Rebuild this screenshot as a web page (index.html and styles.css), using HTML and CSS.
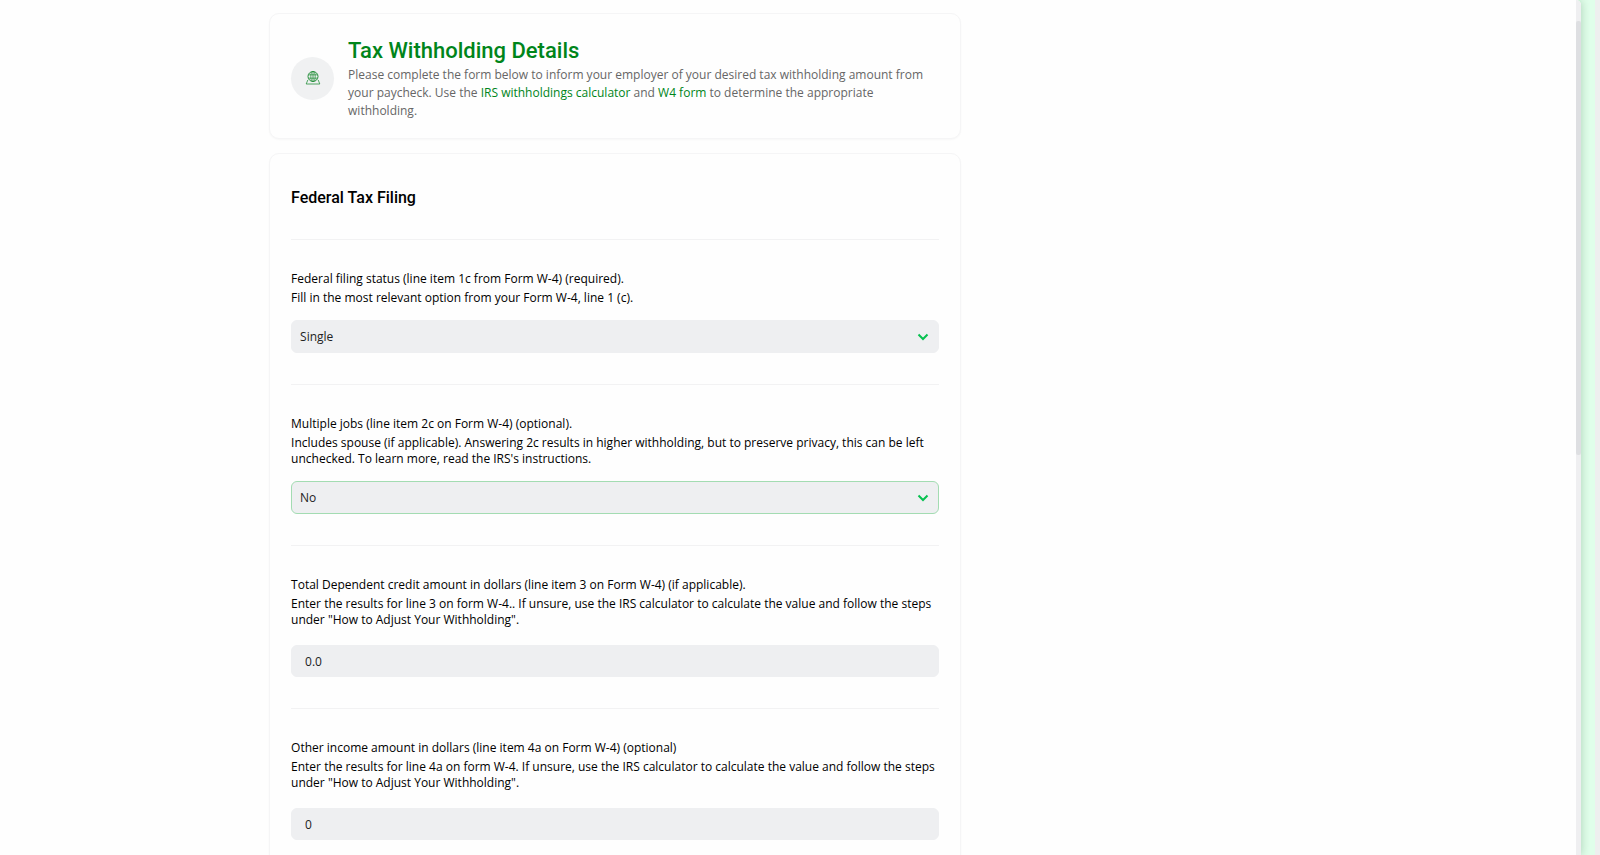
FILE: index.html
```html
<!DOCTYPE html>
<html lang="en">
<head>
    <meta charset="UTF-8">
    <meta name="viewport" content="width=device-width, initial-scale=1.0">
    <title>Tax Withholding Details</title>
    <link rel="stylesheet" href="styles.css">
</head>
<body>
    <div class="window">
        <main class="page">
            <div class="content">
                <header class="card intro">
                    <div class="intro-icon">
                        <svg viewBox="0 0 16 16" width="16" height="16" fill="none" stroke="#27903c" aria-hidden="true">
                            <circle cx="8" cy="6.5" r="5"/>
                            <ellipse cx="8" cy="6.5" rx="2.2" ry="5" stroke-width=".8"/>
                            <path d="M3.4 4.8h9.2M3.4 8.2h9.2M8 1.5v10" stroke-width=".8"/>
                            <path d="M2.8 10L1.2 14h13.6l-1.6-4" stroke-width=".8"/>
                        </svg>
                    </div>
                    <div class="intro-text">
                        <h1>Tax Withholding Details</h1>
                        <p>Please complete the form below to inform your employer of your desired tax withholding amount from your paycheck. Use the <a href="#">IRS withholdings calculator</a> and <a href="#">W4 form</a> to determine the appropriate withholding.</p>
                    </div>
                </header>

                <form class="card">
                    <h2>Federal Tax Filing</h2>

                    <div class="field">
                        <label for="status">Federal filing status (line item 1c from Form W-4) (required).</label>
                        <p>Fill in the most relevant option from your Form W-4, line 1 (c).</p>
                        <select id="status">
                            <option>Single</option>
                            <option>Married</option>
                            <option>Head of household</option>
                        </select>
                    </div>

                    <div class="field">
                        <label for="jobs">Multiple jobs (line item 2c on Form W-4) (optional).</label>
                        <p>Includes spouse (if applicable). Answering 2c results in higher withholding, but to preserve privacy, this can be left unchecked. To learn more, read the IRS's instructions.</p>
                        <select id="jobs" class="active">
                            <option>No</option>
                            <option>Yes</option>
                        </select>
                    </div>

                    <div class="field">
                        <label for="dependents">Total Dependent credit amount in dollars (line item 3 on Form W-4) (if applicable).</label>
                        <p>Enter the results for line 3 on form W-4.. If unsure, use the IRS calculator to calculate the value and follow the steps under "How to Adjust Your Withholding".</p>
                        <input type="text" id="dependents" value="0.0">
                    </div>

                    <div class="field">
                        <label for="income">Other income amount in dollars (line item 4a on Form W-4) (optional)</label>
                        <p>Enter the results for line 4a on form W-4. If unsure, use the IRS calculator to calculate the value and follow the steps under "How to Adjust Your Withholding".</p>
                        <input type="text" id="income" value="0">
                    </div>
                </form>
            </div>
        </main>
        <div class="scrollbar"><div class="thumb"></div></div>
    </div>
    <div class="edge"></div>
</body>
</html>
```
FILE: styles.css
```css
* {
    margin: 0;
    padding: 0;
    box-sizing: border-box;
}

body {
    display: flex;
    height: 100vh;
    overflow: hidden;
    background: #e0feea;
    color: #000;
    font-family: "Open Sans", sans-serif;
    font-size: 12px;
    line-height: 16px;
}

/* Window */

.window {
    flex: 1;
    display: flex;
    background: #fefefe;
    border-top-right-radius: 5px;
    overflow: hidden;
    box-shadow: 1px 0 8px rgba(0, 60, 20, 0.2);
}

.page {
    flex: 1;
    display: grid;
    grid-template-columns: 7fr 18fr 16fr;
    padding-top: 13px;
    overflow: hidden;
}

.content {
    grid-column: 2;
}

.scrollbar {
    width: 5px;
    padding-top: 21px;
    background: #efeff1;
}

.thumb {
    height: 52%;
    background: #dedfe2;
    border-radius: 2px;
}

.edge {
    width: 19px;
    border-right: 5px solid #eeefef;
}

/* Cards */

.card {
    padding: 0 21px;
    background: #fefefe;
    border: 1px solid #f5f5f6;
    border-radius: 10px;
    box-shadow: 0 1px 2px rgba(0, 0, 0, 0.03);
    margin-bottom: 14px;
}

.intro {
    display: flex;
    align-items: center;
    gap: 14px;
    padding: 22px 21px 18px;
}

.intro-icon {
    flex: none;
    display: flex;
    align-items: center;
    justify-content: center;
    width: 43px;
    height: 43px;
    border-radius: 50%;
    background: #f0f1f2;
}

.intro-text {
    flex: 1;
    padding-right: 10px;
}

h1,
h2 {
    font-family: Roboto, "Open Sans", sans-serif;
    font-weight: 500;
}

h1 {
    color: #00851a;
    font-size: 22px;
    line-height: 30px;
}

.intro p {
    color: #666;
    line-height: 18px;
}

.intro a {
    color: #00851a;
    text-decoration: none;
}

h2 {
    font-size: 16px;
    line-height: 24px;
    padding: 32px 0 29px;
}

/* Fields */

.field {
    padding: 31px 0;
    border-top: 1px solid #f2f2f3;
}

.field label {
    display: block;
    margin-bottom: 3px;
}

.field select,
.field input {
    display: block;
    width: 100%;
    border: 1px solid #eeeff1;
    border-radius: 6px;
    background: #eeeff1;
    color: #222;
    font: inherit;
}

.field select {
    height: 33px;
    margin-top: 14px;
    padding: 0 8px;
    appearance: none;
    background-image: url("data:image/svg+xml,%3Csvg xmlns='http://www.w3.org/2000/svg' width='12' height='8' fill='none' stroke='%2306c150' stroke-width='2'%3E%3Cpath d='M1.5 1.5L6 6l4.5-4.5'/%3E%3C/svg%3E");
    background-repeat: no-repeat;
    background-position: right 9px center;
}

.field select.active {
    border-color: #a3dcb2;
}

.field input {
    height: 32px;
    margin-top: 17px;
    padding: 0 13px;
}
```
